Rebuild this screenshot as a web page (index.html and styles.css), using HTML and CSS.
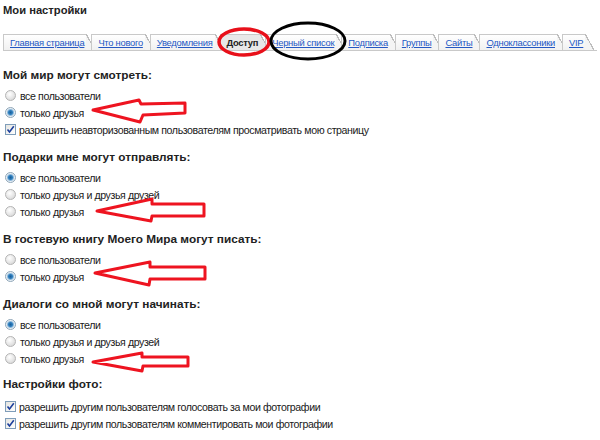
FILE: index.html
```html
<!DOCTYPE html>
<html lang="ru">
<head>
<meta charset="UTF-8">
<title>Мои настройки</title>
<link rel="stylesheet" href="styles.css">
</head>
<body>
<div class="page">
  <h1 class="title">Мои настройки</h1>

  <div class="tabs">
    <a class="tab" href="#">Главная страница</a>
    <a class="tab" href="#">Что нового</a>
    <a class="tab" href="#">Уведомления</a>
    <span class="tab active">Доступ</span>
    <a class="tab" href="#">Черный список</a>
    <a class="tab" href="#">Подписка</a>
    <a class="tab" href="#">Группы</a>
    <a class="tab" href="#">Сайты</a>
    <a class="tab" href="#">Одноклассоники</a>
    <a class="tab" href="#">VIP</a>
  </div>

  <!-- Who can view -->
  <div class="section">
    <h2>Мой мир могут смотреть:</h2>
    <div class="opt"><span class="radio"></span>все пользователи</div>
    <div class="opt"><span class="radio on"></span>только друзья</div>
    <div class="opt"><span class="check"><svg width="9" height="9" viewBox="0 0 9 9"><path d="M1.5 4.5 L3.5 7 L7.8 1.2" fill="none" stroke="#1c3f9c" stroke-width="1.6"/></svg></span>разрешить неавторизованным пользователям просматривать мою страницу</div>
  </div>

  <div class="section">
    <h2>Подарки мне могут отправлять:</h2>
    <div class="opt"><span class="radio on"></span>все пользователи</div>
    <div class="opt"><span class="radio"></span>только друзья и друзья друзей</div>
    <div class="opt"><span class="radio"></span>только друзья</div>
  </div>

  <div class="section">
    <h2>В гостевую книгу Моего Мира могут писать:</h2>
    <div class="opt"><span class="radio"></span>все пользователи</div>
    <div class="opt"><span class="radio on"></span>только друзья</div>
  </div>

  <div class="section">
    <h2>Диалоги со мной могут начинать:</h2>
    <div class="opt"><span class="radio on"></span>все пользователи</div>
    <div class="opt"><span class="radio"></span>только друзья и друзья друзей</div>
    <div class="opt"><span class="radio"></span>только друзья</div>
  </div>

  <div class="section photo">
    <h2>Настройки фото:</h2>
    <div class="opt"><span class="check"><svg width="9" height="9" viewBox="0 0 9 9"><path d="M1.5 4.5 L3.5 7 L7.8 1.2" fill="none" stroke="#1c3f9c" stroke-width="1.6"/></svg></span>разрешить другим пользователям голосовать за мои фотографии</div>
    <div class="opt"><span class="check"><svg width="9" height="9" viewBox="0 0 9 9"><path d="M1.5 4.5 L3.5 7 L7.8 1.2" fill="none" stroke="#1c3f9c" stroke-width="1.6"/></svg></span>разрешить другим пользователям комментировать мои фотографии</div>
  </div>

  <!-- hand-drawn marks over the screenshot -->
  <svg class="marks" width="600" height="440" viewBox="0 0 600 440">
    <ellipse cx="244" cy="42" rx="25" ry="13" fill="none" stroke="#e8101a" stroke-width="3.5"/>
    <ellipse cx="308" cy="41" rx="37" ry="18" fill="none" stroke="#000" stroke-width="3"/>
    <g fill="none" stroke="#ee1420" stroke-width="3" stroke-linejoin="round">
      <path d="M93 110 L139 100 L141 104 L185 103 L185 113 L143 115 L140 122 Z"/>
      <path d="M97 211 L152 199 L152 204 L204 204 L204 216 L152 216 L151 221 Z"/>
      <path d="M95 273 L150 262 L150 267 L205 267 L205 279 L150 279 L149 285 Z"/>
      <path d="M93 362 L142 353 L142 357 L188 357 L188 366 L143 366 L142 371 Z"/>
    </g>
  </svg>
</div>
</body>
</html>
```

FILE: styles.css
```css
/* Settings page */
body {
  margin: 0;
  background: #fff;
  font-family: "Liberation Sans", Arial, sans-serif;
  font-size: 10.6px;
  letter-spacing: -0.4px;
  color: #1a1a1a;
}
.page {
  position: relative;
  width: 600px;
  height: 440px;
  padding: 1px 3px 0;
  box-sizing: border-box;
  overflow: hidden;
}
.title {
  margin: 0;
  font-size: 11.2px;
  line-height: 18px;
  letter-spacing: 0;
  font-weight: bold;
  color: #222;
}

/* Tabs */
.tabs {
  display: flex;
  margin-top: 15px;
  border-bottom: 1px solid #c9c9c9;
}
.tab {
  position: relative;
  height: 15px;
  line-height: 15px;
  padding: 0 2px 0 6px;
  margin-right: 5px;
  border-top: 1px solid #c9c9c9;
  border-left: 1px solid #c9c9c9;
  background: linear-gradient(#fff, #f1f1f1);
  color: #2458c4;
  font-size: 9.4px;
  letter-spacing: -0.27px;
  white-space: nowrap;
}
.tab::after {
  content: '';
  position: absolute;
  top: -1px;
  right: -9px;
  width: 9px;
  height: 16px;
  background: linear-gradient(to bottom left, transparent calc(50% - 0.6px), #bdbdbd calc(50% - 0.6px), #bdbdbd calc(50% + 0.6px), #f4f4f4 calc(50% + 0.6px));
}
.active {
  background: #e8e8e8;
  color: #222;
  font-weight: bold;
}
.active::after {
  background: linear-gradient(to bottom left, transparent calc(50% - 0.6px), #bdbdbd calc(50% - 0.6px), #bdbdbd calc(50% + 0.6px), #e8e8e8 calc(50% + 0.6px));
}

/* Sections */
.section {
  margin-top: 10px;
}
.tabs + .section {
  margin-top: 15px;
}
.section h2 {
  margin: 0 0 3px;
  font-size: 11.8px;
  line-height: 18px;
  letter-spacing: 0;
  font-weight: bold;
  color: #222;
}
.section.photo {
  margin-top: 8px;
}
.photo h2 {
  margin-bottom: 5px;
}
.opt {
  display: flex;
  align-items: center;
  height: 17px;
}

/* Radios and checkboxes */
.radio {
  width: 11px;
  height: 11px;
  margin: 0 4px 0 2px;
  box-sizing: border-box;
  border: 1px solid #b4b4b4;
  border-radius: 50%;
  background: radial-gradient(circle at 40% 35%, #fff 0, #eaeaea 45%, #cfcfcf 100%);
}
.radio.on {
  border-color: #8fa6b8;
  background: radial-gradient(circle at 50% 50%, #1b5f98 0, #2f7fbf 2px, #8db8da 3px, #e6eef5 4px, #f5f7f9 100%);
}
.check {
  display: flex;
  align-items: center;
  justify-content: center;
  width: 11px;
  height: 11px;
  margin: 0 3px 0 2px;
  box-sizing: border-box;
  border: 1px solid #7f9db9;
  background: linear-gradient(135deg, #e4e4e0, #fff);
}

/* Annotation layer */
.marks {
  position: absolute;
  top: 0;
  left: 0;
  pointer-events: none;
}
```
